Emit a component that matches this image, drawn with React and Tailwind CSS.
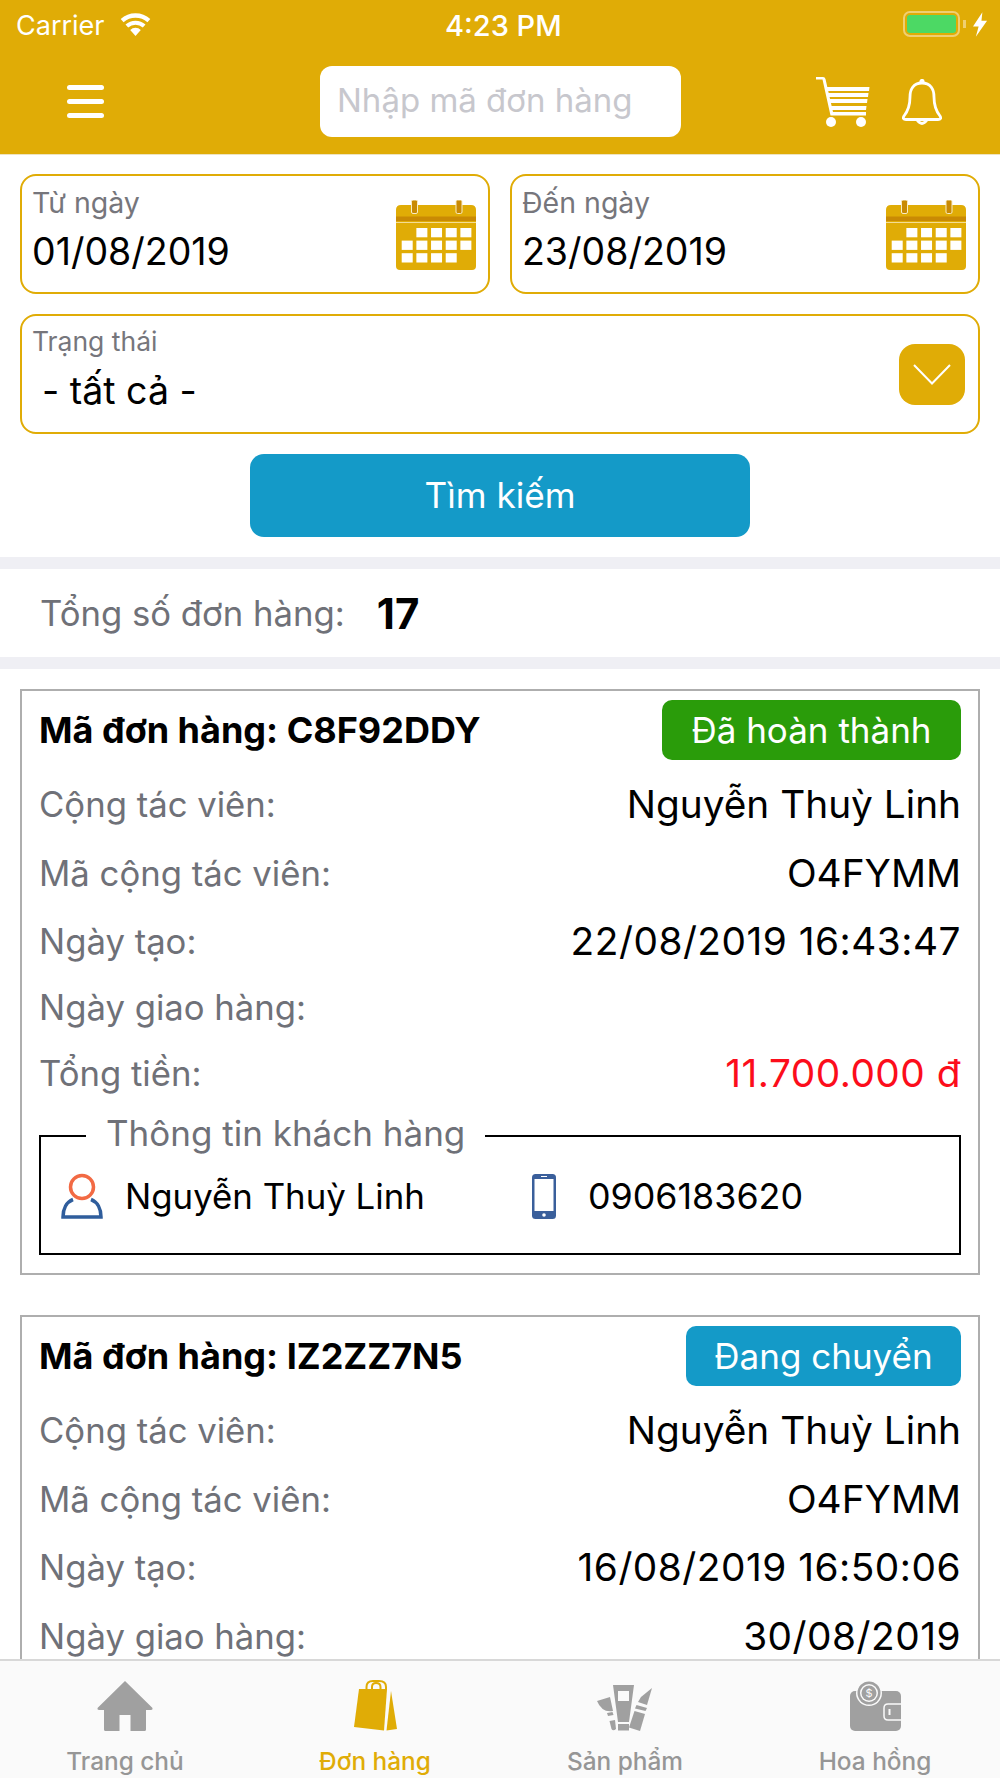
const GOLD = '#e0ac06';

function Wifi() {
  return (
    <svg width="33" height="25" viewBox="0 0 34 26" fill="white">
      <path d="M17 25 L11.500 18.600 A8 8 0 0 1 22.500 18.600 Z" />
      <path d="M9.400 16.200 L6.600 13 A15.500 15.500 0 0 1 27.400 13 L24.600 16.200 A11.500 11.500 0 0 0 9.400 16.200 Z" />
      <path d="M4.600 10.700 L1.600 7.300 A23 23 0 0 1 32.400 7.300 L29.400 10.700 A19 19 0 0 0 4.600 10.700 Z" />
    </svg>
  );
}

function Cart() {
  return (
    <svg width="54" height="50" viewBox="0 0 54 50" fill="white">
      <path d="M0 0 H7 Q9 0 9.500 2 L17 35 H50 V38.500 H14.500 L6.500 2.500 H0 Z" />
      <path d="M9 10 H53.500 L53 14 H10 Z M11 16 H52.500 L52 20 H12 Z M12.500 22 H51.500 L51 26 H13.500 Z M14 29 H50.500 L50 33 H15 Z" />
      <circle cx="15" cy="45" r="5" />
      <circle cx="45" cy="45" r="5" />
    </svg>
  );
}

function Bell() {
  return (
    <svg width="40" height="47" viewBox="0 0 40 47" fill="none" stroke="white" strokeWidth="2.800" strokeLinejoin="round">
      <path d="M20 4 C11 4 8 11 8 18 C8 27 6 32 2 37 Q0 40.500 4 40.500 H36 Q40 40.500 38 37 C34 32 32 27 32 18 C32 11 29 4 20 4 Z" />
      <path d="M15 41 Q20 48 25 41" />
      <circle cx="20" cy="2.500" r="1.200" fill="white" />
    </svg>
  );
}

function Calendar() {
  const cells = [
    [0, 1, 1, 1, 1],
    [1, 1, 1, 1, 1],
    [1, 1, 1, 1, 0],
  ];
  return (
    <svg width="80" height="70" viewBox="0 0 80 70">
      <path d="M5 5 H75 Q80 5 80 10 V66 Q80 70 76 70 H4 Q0 70 0 66 V10 Q0 5 5 5 Z" fill={GOLD} />
      <rect x="0" y="16.500" width="80" height="4.500" fill="#c98a04" />
      <rect x="0" y="22" width="80" height="1" fill="#f3dc94" />
      <rect x="15.500" y="0" width="6" height="13.500" rx="1.500" fill="#c98a04" stroke="#f8ecc4" />
      <rect x="60" y="0" width="6" height="13.500" rx="1.500" fill="#c98a04" stroke="#f8ecc4" />
      {cells.map((row, r) =>
        row.map((on, c) =>
          on ? <rect key={`${r}-${c}`} x={5.700 + c * 14.670} y={28 + r * 12.600} width="11" height="9.300" fill="white" /> : null
        )
      )}
    </svg>
  );
}

function UserIcon() {
  return (
    <svg width="42" height="46" viewBox="0 0 42 46" fill="none" strokeWidth="3.500">
      <circle cx="21" cy="14" r="11.500" stroke="#f26a44" />
      <path d="M12 26.500 C5.500 29 2 36 2 44 H40 C40 36 36.500 29 30 26.500" stroke="#2f5d9c" />
    </svg>
  );
}

function PhoneIcon() {
  return (
    <svg width="24" height="45" viewBox="0 0 24 45">
      <rect x="0" y="0" width="24" height="45" rx="3.500" fill="#3a5f9b" />
      <rect x="2.500" y="5" width="19" height="32" fill="white" />
      <rect x="9" y="2" width="6" height="1" fill="white" />
      <circle cx="12" cy="41" r="1.800" fill="white" />
    </svg>
  );
}

function HomeIcon() {
  return (
    <svg width="56" height="50" viewBox="0 0 56 50" fill="#a0a0a0">
      <path d="M28 0 L55.500 27 Q56 29 54 29 H49 V48.500 Q49 50 47.500 50 H33.500 V34 H22.500 V50 H8.500 Q7 50 7 48.500 V29 H2 Q0 29 0.500 27 Z" />
    </svg>
  );
}

function BagIcon() {
  return (
    <svg width="43" height="51" viewBox="0 0 43 51" fill={GOLD}>
      <path d="M5 9 H33 L30 50.500 L0 47 Z" />
      <path d="M37 11 L43 49 L32.500 50.500 Z" />
      <path d="M12.500 10 V7 Q12.500 1 19 1 H25 Q32 1 32 7 V10 M18 10 V7 Q18 3 22 3 Q26.500 3 26.500 7 V10" fill="none" stroke={GOLD} strokeWidth="2" />
    </svg>
  );
}

function CosmeticsIcon() {
  return (
    <svg width="56" height="46" viewBox="0 0 56 46" fill="#a0a0a0">
      <path d="M16 0 H37 L32 37 H21 Z M21 6 V16 H32 V6 Z" fillRule="evenodd" />
      <rect x="21" y="39" width="11" height="6.500" />
      <path d="M0 16 L13 12 L16 26 Q5 28 0 16 Z" />
      <path d="M10 28 L15.500 27 L16.500 30 L11 31 Z" />
      <path d="M12.500 36 L18 35 L19 44 Q16 46.500 14.500 44 Z" />
      <path d="M44 12 L55 3 L50 20 L41 17 Z" />
      <path d="M39.500 20 L50 23 L48.500 26 L38 23.500 Z" />
      <path d="M37.500 26 L48 29 L43 46 L32 42.500 Z" />
    </svg>
  );
}

function WalletIcon() {
  return (
    <svg width="51" height="51" viewBox="0 0 51 51" fill="#a0a0a0">
      <rect x="0" y="11" width="51" height="40" rx="5" />
      <circle cx="19" cy="13" r="13" fill="#fafafa" />
      <circle cx="19" cy="13" r="11.500" />
      <circle cx="19" cy="13" r="9" fill="#fafafa" />
      <circle cx="19" cy="13" r="7.500" />
      <text x="19" y="17" fontSize="11" fill="#fafafa" textAnchor="middle" fontFamily="Inter, sans-serif">$</text>
      <path d="M51 24 H38 Q34 24 34 28 V36 Q34 40 38 40 H51" stroke="#fafafa" strokeWidth="1.500" />
      <rect x="38.500" y="29" width="2" height="6" fill="#fafafa" />
    </svg>
  );
}

function DateField({ label, value }) {
  return (
    <div className="flex-1 h-[120px] rounded-[16px] border-2 border-[#e0ac06] pl-[10px] pr-[12px] flex justify-between">
      <div className="pt-[11px]">
        <div className="text-[28.500px] leading-[32px] text-[#76767c]">{label}</div>
        <div className="text-[37.500px] leading-[44px] mt-[11px] text-black">{value}</div>
      </div>
      <div className="mt-[24px]"><Calendar /></div>
    </div>
  );
}

function Row({ label, value, numeric, color = 'text-black' }) {
  // a row with no value is a little shorter in the app
  return (
    <div className={`${value ? 'h-[68.5px]' : 'h-[63.5px]'} flex items-center justify-between`}>
      <span className="text-[34.700px] text-[#6f7178]">{label}</span>
      <span className={`text-[38.800px] ${numeric ? 'tracking-[0.5px]' : ''} ${color}`}>{value}</span>
    </div>
  );
}

function OrderCard({ code, status, statusColor, statusWidth, rows, customer }) {
  return (
    <div className="border-2 border-[#aeaeae] px-[17px] pt-[9px] pb-[18px] leading-[44px]">
      <div className="flex items-center justify-between h-[60px]">
        <span className="font-bold text-[36px] text-black">Mã đơn hàng: {code}</span>
        <span className={`${statusColor} ${statusWidth} h-[60px] rounded-[10px] text-white flex items-center justify-center text-[35px]`}>
          {status}
        </span>
      </div>
      <div className="mt-[10px]">
        {rows.map((row) => (
          <Row key={row.label} {...row} />
        ))}
      </div>
      {customer && (
        <div className="relative mt-[27.5px] h-[120px] border-2 border-black flex items-center pt-[2px]">
          <span className="absolute left-[45px] top-[-26px] bg-white px-[20px] text-[35px] text-[#6f7178]">Thông tin khách hàng</span>
          <div className="ml-[20px]"><UserIcon /></div>
          <span className="ml-[22px] w-[407px] text-[34.800px] text-black">{customer.name}</span>
          <PhoneIcon />
          <span className="ml-[32px] text-[35.800px] text-black">{customer.phone}</span>
        </div>
      )}
    </div>
  );
}

function Tab({ icon, label, active }) {
  return (
    <div className="flex-1 flex flex-col items-center">
      <div className="h-[51px] flex items-end">{icon}</div>
      <span className={`mt-[15px] text-[24.400px] leading-[30px] font-medium ${active ? 'text-[#e0ac06]' : 'text-[#969696]'}`}>{label}</span>
    </div>
  );
}

export default function App() {
  return (
    <div className="w-[1000px] h-[1778px] overflow-hidden flex flex-col bg-white font-['Inter','Liberation_Sans',sans-serif]">
      <header className="h-[155px] shrink-0 bg-[#e0ac06] border-b border-[#eee3bf]">
        <div className="h-[52px] relative flex items-center justify-between pl-[16px] pr-[12px] text-white text-[27px]">
          <div className="flex items-center gap-[14px]">
            <span>Carrier</span>
            <div className="mb-[4px]"><Wifi /></div>
          </div>
          <span className="absolute left-[445px] text-[29px] font-medium">4:23 PM</span>
          <div className="flex items-center mb-[4px]">
            <div className="w-[57px] h-[26px] rounded-[7px] border-2 border-[#efcf72] p-[2px]">
              <div className="w-full h-full rounded-[3px] bg-[#4cd964]" />
            </div>
            <div className="ml-[3px] w-[3px] h-[8px] bg-[#efcf72]" />
            <svg width="15" height="25" viewBox="0 0 16 26" fill="white" className="ml-[7px]">
              <path d="M10 0 L0 15 H6 L3 26 L15 9 H9 Z" />
            </svg>
          </div>
        </div>
        <div className="h-[102px] flex items-start">
          <div className="w-[320px] pl-[67px] pt-[33px]">
            <div className="w-[37px] flex flex-col gap-[9px]">
              <div className="h-[5px] rounded-full bg-white" />
              <div className="h-[5px] rounded-full bg-white" />
              <div className="h-[5px] rounded-full bg-white" />
            </div>
          </div>
          <div className="w-[361px] h-[71px] mt-[14px] rounded-[12px] bg-white pl-[17px] pb-[2px] flex items-center text-[33px] text-[#c7c7cd]">
            Nhập mã đơn hàng
          </div>
          <div className="ml-[135px] mt-[25px]"><Cart /></div>
          <div className="ml-[32px] mt-[27px]"><Bell /></div>
        </div>
      </header>

      <main className="flex-1 min-h-0 overflow-hidden">
        <div className="px-[20px] pt-[19px]">
          <div className="flex gap-[20px]">
            <DateField label="Từ ngày" value="01/08/2019" />
            <DateField label="Đến ngày" value="23/08/2019" />
          </div>
          <div className="mt-[20px] h-[120px] rounded-[16px] border-2 border-[#e0ac06] pl-[10px] pr-[13px] flex items-center justify-between">
            <div className="self-start pt-[9px]">
              <div className="text-[26.500px] leading-[32px] text-[#76767c]">Trạng thái</div>
              <div className="text-[37.500px] leading-[44px] mt-[12px] pl-[10px] text-black">- tất cả -</div>
            </div>
            <div className="w-[66px] h-[61px] rounded-[16px] bg-[#e0ac06] flex items-center justify-center">
              <svg width="38" height="21" viewBox="0 0 38 21" fill="none" stroke="white" strokeWidth="2">
                <path d="M1 1 L19 19.500 L37 1" />
              </svg>
            </div>
          </div>
          <div className="mt-[20px] mx-auto w-[500px] h-[83px] rounded-[14px] bg-[#149ac8] text-white text-[35.200px] flex items-center justify-center">
            Tìm kiếm
          </div>
        </div>

        <div className="mt-[20px] h-[12px] bg-[#efeff4]" />
        <div className="h-[88px] pl-[40px] flex items-center">
          <span className="text-[34.700px] text-[#6f7178]">Tổng số đơn hàng:</span>
          <span className="ml-[32px] font-bold text-[42px] text-black">17</span>
        </div>
        <div className="h-[12px] bg-[#efeff4]" />

        <div className="px-[20px] pt-[20px] flex flex-col gap-[40px]">
          <OrderCard
            code="C8F92DDY"
            status="Đã hoàn thành"
            statusColor="bg-[#2a9c0a]"
            statusWidth="w-[299px]"
            rows={[
              { label: 'Cộng tác viên:', value: 'Nguyễn Thuỳ Linh' },
              { label: 'Mã cộng tác viên:', value: 'O4FYMM' },
              { label: 'Ngày tạo:', value: '22/08/2019 16:43:47', numeric: true },
              { label: 'Ngày giao hàng:', value: '' },
              { label: 'Tổng tiền:', value: '11.700.000 đ', numeric: true, color: 'text-[#fc0d1b]' },
            ]}
            customer={{ name: 'Nguyễn Thuỳ Linh', phone: '0906183620' }}
          />
          <OrderCard
            code="IZ2ZZ7N5"
            status="Đang chuyển"
            statusColor="bg-[#149ac8]"
            statusWidth="w-[275px]"
            rows={[
              { label: 'Cộng tác viên:', value: 'Nguyễn Thuỳ Linh' },
              { label: 'Mã cộng tác viên:', value: 'O4FYMM' },
              { label: 'Ngày tạo:', value: '16/08/2019 16:50:06', numeric: true },
              { label: 'Ngày giao hàng:', value: '30/08/2019', numeric: true },
            ]}
          />
        </div>
      </main>

      <nav className="h-[119px] shrink-0 bg-[#fafafa] border-t-2 border-[#d8d8d8] flex pt-[19px]">
        <Tab icon={<HomeIcon />} label="Trang chủ" />
        <Tab icon={<BagIcon />} label="Đơn hàng" active />
        <Tab icon={<CosmeticsIcon />} label="Sản phẩm" />
        <Tab icon={<WalletIcon />} label="Hoa hồng" />
      </nav>
    </div>
  );
}
